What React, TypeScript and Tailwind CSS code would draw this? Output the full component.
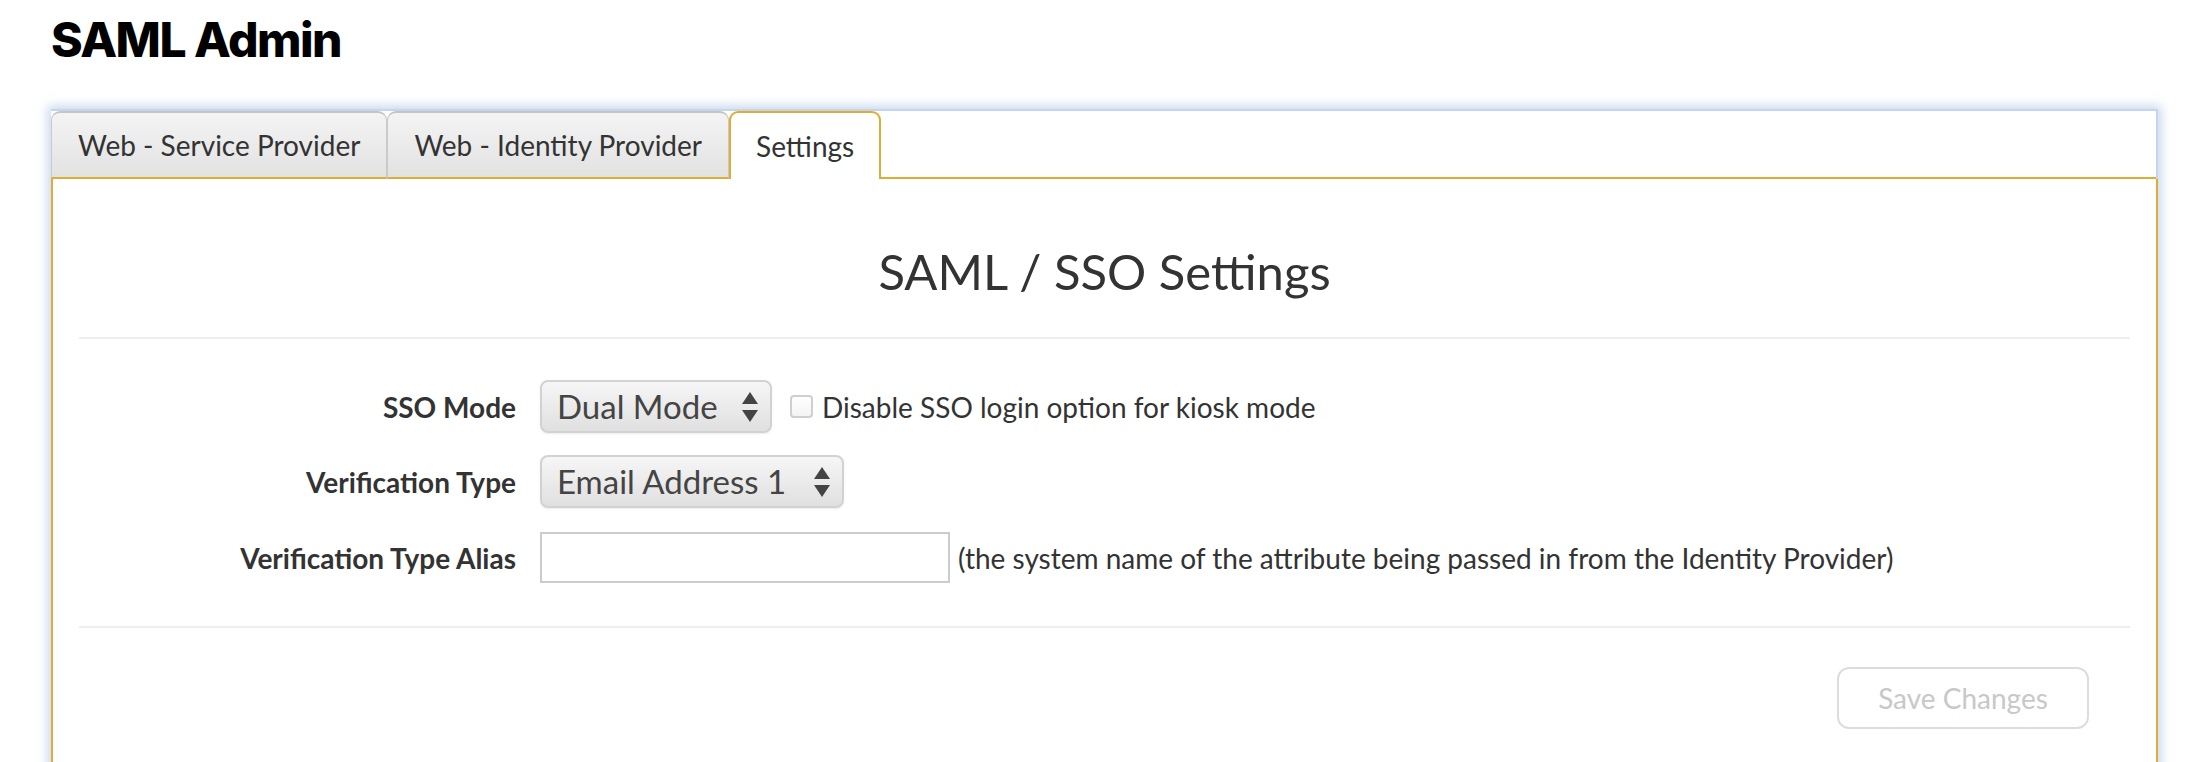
import React from "react";

const TABS = ["Web - Service Provider", "Web - Identity Provider", "Settings"];

function SelectArrows() {
  return (
    <svg width="18" height="34" viewBox="0 0 18 34" className="shrink-0">
      <path d="M9 2 L17 14 L1 14 Z" fill="#444" />
      <path d="M9 32 L17 20 L1 20 Z" fill="#444" />
    </svg>
  );
}

function FakeSelect({ value, width }: { value: string; width: string }) {
  return (
    <div
      className={`${width} h-[53px] flex items-center justify-between pl-[15px] pr-[11px] rounded-[8px] border-2 border-[#d2d2d2] bg-gradient-to-b from-[#f6f6f6] to-[#e0e0e0] shadow-[0_1px_2px_rgba(0,0,0,0.08)] text-[33px] text-[#444] cursor-pointer`}
    >
      <span>{value}</span>
      <SelectArrows />
    </div>
  );
}

function FormRow({ label, children }: { label: string; children: React.ReactNode }) {
  return (
    <div className="flex items-center gap-[24px]">
      <label className="w-[437px] text-right font-bold text-[28px] text-[#333]">{label}</label>
      <div className="flex items-center">{children}</div>
    </div>
  );
}

export default function App() {
  const active = "Settings";

  return (
    <div className="min-h-screen bg-white pl-[51px] pr-[54px]" style={{ fontFamily: "Lato, 'Open Sans', sans-serif" }}>
      {/* Page title */}
      <h1
        className="pt-[11px] text-[48px] leading-[58px] font-extrabold tracking-[-1.5px] text-black"
        style={{ fontFamily: "Inter, 'Liberation Sans', sans-serif" }}
      >
        SAML Admin
      </h1>

      {/* Tabbed panel */}
      <div className="mt-[40px] bg-white shadow-[0_0_10px_3px_rgba(150,180,222,0.55)]">
        <div className="flex items-end border-t-2 border-r-2 border-[#c6d5ea]">
          {TABS.map((tab) =>
            tab === active ? (
              <div
                key={tab}
                className="h-[68px] px-[25px] flex items-center bg-white border-2 border-b-0 border-[#e0ac35] rounded-t-[9px] text-[28px] text-[#333]"
              >
                {tab}
              </div>
            ) : (
              <div
                key={tab}
                className="h-[68px] px-[26px] flex items-center rounded-t-[9px] border-t-2 border-x-[1px] border-t-[#c4c4c4] border-x-[#cacaca] border-b-2 border-b-[#e0ac35] bg-gradient-to-b from-[#f4f4f4] to-[#e2e2e2] text-[28px] text-[#333]"
              >
                {tab}
              </div>
            )
          )}
          <div className="flex-1 h-[68px] border-b-2 border-[#e0ac35]" />
        </div>

        <div className="border-2 border-t-0 border-[#e0ac35] px-[26px] pb-[80px]">
          <h2 className="pt-[62px] text-center text-[49px] leading-[60px] text-[#333]">SAML / SSO Settings</h2>
          <hr className="mt-[36px] border-0 h-[2px] bg-[#eeeeee]" />

          <div className="pt-[41px] pb-[43px] flex flex-col">
            <FormRow label="SSO Mode">
              <FakeSelect value="Dual Mode" width="w-[232px]" />
              <span className="ml-[18px] w-[23px] h-[23px] rounded-[4px] border-2 border-[#cfcfcf] bg-gradient-to-b from-white to-[#f3f3f3]" />
              <span className="ml-[9px] text-[28px] text-[#333]">Disable SSO login option for kiosk mode</span>
            </FormRow>
            <div className="mt-[22px]">
              <FormRow label="Verification Type">
                <FakeSelect value="Email Address 1" width="w-[304px]" />
              </FormRow>
            </div>
            <div className="mt-[24px]">
              <FormRow label="Verification Type Alias">
                <input type="text" className="w-[410px] h-[51px] border-2 border-[#cccccc] bg-white outline-none px-[10px] text-[28px]" />
                <span className="ml-[8px] text-[28px] text-[#333]">
                  (the system name of the attribute being passed in from the Identity Provider)
                </span>
              </FormRow>
            </div>
          </div>

          <hr className="border-0 h-[2px] bg-[#eeeeee]" />

          <div className="flex justify-end pt-[39px] pr-[41px]">
            <button
              type="button"
              disabled
              className="w-[252px] h-[62px] rounded-[12px] border-2 border-[#dddddd] bg-white text-[28px] text-[#c8c8c8]"
            >
              Save Changes
            </button>
          </div>
        </div>
      </div>
    </div>
  );
}
